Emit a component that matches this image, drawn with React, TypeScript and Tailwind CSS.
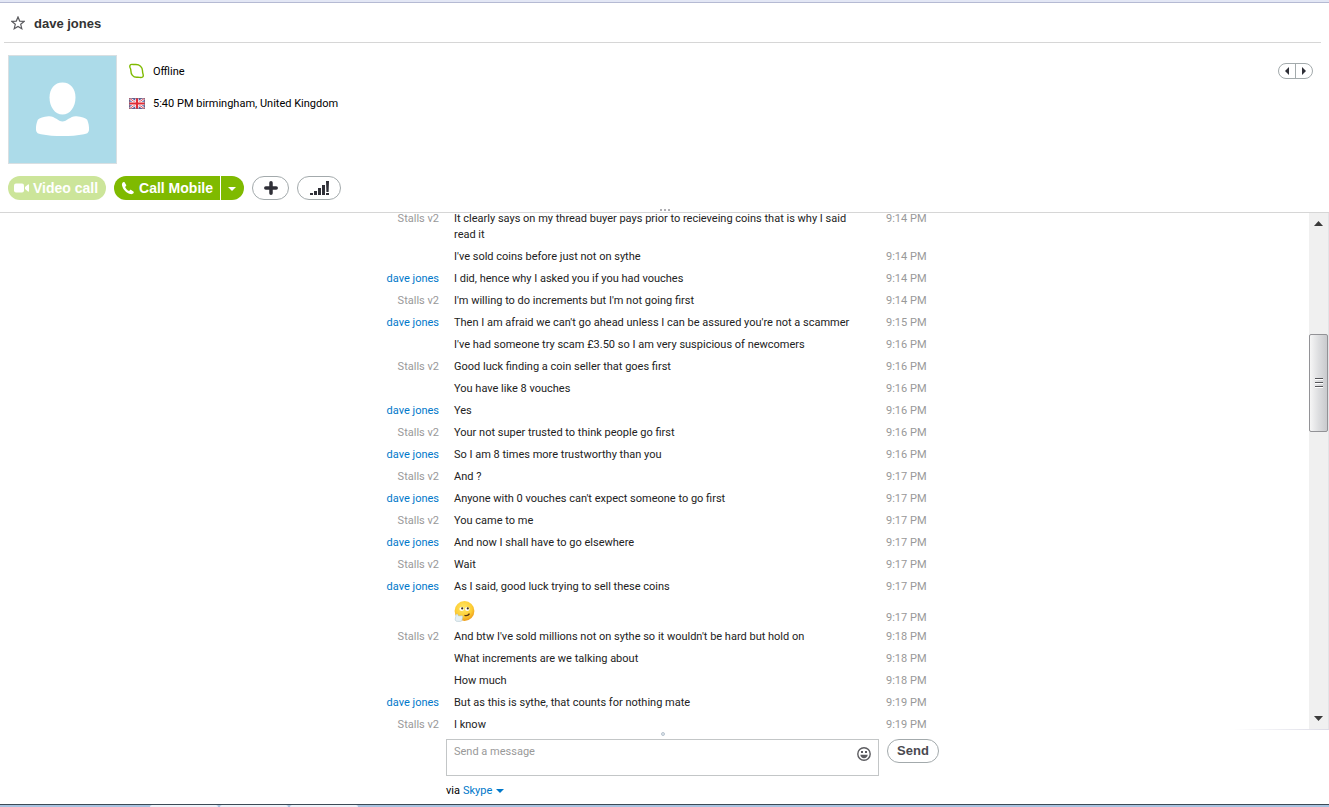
import clsx from "clsx"
import type { ReactNode } from "react"

interface Message {
  from?: string
  text: string
  time: string
}

const ME = "Stalls v2"
const FRIEND = "dave jones"

const messages: Message[] = [
  {
    from: ME,
    text: "It clearly says on my thread buyer pays prior to recieveing coins that is why I said read it",
    time: "9:14 PM",
  },
  { text: "I've sold coins before just not on sythe", time: "9:14 PM" },
  { from: FRIEND, text: "I did, hence why I asked you if you had vouches", time: "9:14 PM" },
  { from: ME, text: "I'm willing to do increments but I'm not going first", time: "9:14 PM" },
  {
    from: FRIEND,
    text: "Then I am afraid we can't go ahead unless I can be assured you're not a scammer",
    time: "9:15 PM",
  },
  { text: "I've had someone try scam £3.50 so I am very suspicious of newcomers", time: "9:16 PM" },
  { from: ME, text: "Good luck finding a coin seller that goes first", time: "9:16 PM" },
  { text: "You have like 8 vouches", time: "9:16 PM" },
  { from: FRIEND, text: "Yes", time: "9:16 PM" },
  { from: ME, text: "Your not super trusted to think people go first", time: "9:16 PM" },
  { from: FRIEND, text: "So I am 8 times more trustworthy than you", time: "9:16 PM" },
  { from: ME, text: "And ?", time: "9:17 PM" },
  { from: FRIEND, text: "Anyone with 0 vouches can't expect someone to go first", time: "9:17 PM" },
  { from: ME, text: "You came to me", time: "9:17 PM" },
  { from: FRIEND, text: "And now I shall have to go elsewhere", time: "9:17 PM" },
  { from: ME, text: "Wait", time: "9:17 PM" },
  { from: FRIEND, text: "As I said, good luck trying to sell these coins", time: "9:17 PM" },
  { text: ":think:", time: "9:17 PM" },
  {
    from: ME,
    text: "And btw I've sold millions not on sythe so it wouldn't be hard but hold on",
    time: "9:18 PM",
  },
  { text: "What increments are we talking about", time: "9:18 PM" },
  { text: "How much", time: "9:18 PM" },
  { from: FRIEND, text: "But as this is sythe, that counts for nothing mate", time: "9:19 PM" },
  { from: ME, text: "I know", time: "9:19 PM" },
]

function StarIcon() {
  return (
    <svg width="14" height="14" viewBox="0 0 14 14" fill="none" stroke="#5a5a5e" strokeWidth="1.2">
      <path d="M7 1l1.7 4.1 4.4.3-3.4 2.9 1.1 4.4L7 10.4l-3.8 2.3 1.1-4.4L.9 5.4l4.4-.3z" />
    </svg>
  )
}

function Avatar() {
  return (
    <svg width="109" height="109" viewBox="0 0 109 109" role="img" aria-label="dave jones">
      <rect x="0.5" y="0.5" width="108" height="108" fill="#acdbe9" stroke="#d8dfe2" />
      <path
        d="M54.5 27.5c8 0 13 6.2 13 15 0 9.500-5.500 17-13 17s-13-7.500-13-17c0-8.800 5-15 13-15z"
        fill="#fff"
      />
      <path
        d="M40.500 61.300c6-.6 9.500 5.200 14 5.200s8-5.800 14-5.200c5 .5 9 1.700 10.700 3.400 1.300 3.300 2.100 7 1.800 10-.3 3.500-2.500 4-5 4.500-13 2.500-30 2.500-43 0-2.500-.5-4.700-1-5-4.500-.3-3 .5-6.700 1.800-10 1.700-1.700 5.700-2.900 10.700-3.400z"
        fill="#fff"
      />
    </svg>
  )
}

function OfflineIcon() {
  return (
    <svg width="16" height="16" viewBox="0 0 16 16" fill="none" stroke="#7fba00" strokeWidth="1.4">
      <path d="M1 4.400C.4 2.500 1.300 1.200 3.100 1.400c1.400.1 2 .2 3.400.1C10.600 1.300 13.500 4 13.500 7.800c0 1.500.1 2.100.5 3.200.5 1.400.4 2.300-.4 3-.9.7-1.800.6-3.100.4-1.100-.2-1.800-.1-2.900-.1C4 14.300 1.900 11.200 1.900 8c0-1.500-.4-2.300-.9-3.600z" />
    </svg>
  )
}

function FlagIcon() {
  return (
    <svg width="16" height="11" viewBox="0 0 16 11">
      <rect width="16" height="11" fill="#4a63a8" />
      <path d="M0 0l16 11M16 0L0 11" stroke="#fff" strokeWidth="2.4" />
      <path d="M0 0l16 11M16 0L0 11" stroke="#e0505a" strokeWidth="1" />
      <path d="M8 0v11M0 5.500h16" stroke="#fff" strokeWidth="3.6" />
      <path d="M8 0v11M0 5.500h16" stroke="#e02c37" strokeWidth="2.2" />
      <rect x="0.5" y="0.5" width="15" height="10" fill="none" stroke="#7c5c78" strokeOpacity="0.6" />
    </svg>
  )
}

function CameraIcon() {
  return (
    <svg width="15" height="10" viewBox="0 0 15 10" fill="currentColor">
      <rect y="0.5" width="10" height="9" rx="2" />
      <path d="M11 4l3-2.500q1-.5 1 .5v6q0 1-1 .5L11 6z" />
    </svg>
  )
}

function PhoneIcon() {
  return (
    <svg width="14" height="14" viewBox="0 0 14 14" fill="currentColor">
      <path d="M2.200 1.300C1 2 .7 3.200 1.100 4.700c.9 3.600 4.200 7.200 8 8.300 1.600.4 2.900 0 3.600-1.300.2-.5.100-.9-.3-1.200L10.200 9c-.4-.3-.9-.3-1.200.1l-.8.9C6.300 9.200 4.900 7.700 4.100 5.900l.9-.8c.3-.3.4-.7.200-1.100L3.700 1.500c-.3-.5-.9-.5-1.500-.2z" />
    </svg>
  )
}

function PlusIcon() {
  return (
    <svg width="14" height="14" viewBox="0 0 14 14" stroke="#2f2f37" strokeWidth="3.5" strokeLinecap="round">
      <path d="M7 1.800v10.400M1.800 7h10.400" />
    </svg>
  )
}

function SignalIcon() {
  return (
    <svg width="19" height="14" viewBox="0 0 19 14" fill="#2f2f37">
      <path d="M0 12h3v2H0zM4 10h3v4H4zM8 7h3v7H8zM12 4h3v10h-3zM16 0h3l-.4 11h-2.200zM16 12h3v2h-3z" />
    </svg>
  )
}

function CaretIcon() {
  return (
    <svg width="8" height="4" viewBox="0 0 8 4" fill="currentColor">
      <path d="M0 0h8L4 4z" />
    </svg>
  )
}

function ThinkingEmoji() {
  return (
    <svg width="21" height="21" viewBox="0 0 21 21" role="img" aria-label="thinking">
      <defs>
        <radialGradient id="face" cx="0.45" cy="0.35" r="0.65">
          <stop offset="0" stopColor="#ffe768" />
          <stop offset="0.65" stopColor="#fdce35" />
          <stop offset="1" stopColor="#ee9d1b" />
        </radialGradient>
      </defs>
      <circle cx="10.5" cy="10" r="9.9" fill="url(#face)" />
      <ellipse cx="7.7" cy="8" rx="2.3" ry="1.9" fill="#fff" />
      <ellipse cx="13.3" cy="8" rx="2.3" ry="1.9" fill="#fff" />
      <circle cx="8.2" cy="7.4" r="1.1" fill="#3b2c1c" />
      <circle cx="13.8" cy="7.4" r="1.1" fill="#3b2c1c" />
      <path d="M10.500 14.300c2 .7 3.800.2 5-1.600" stroke="#5a3310" strokeWidth="1.4" fill="none" />
      <path
        d="M2.200 13.500c.6-.8 1.700-.4 1.900.5l.3 1 3.200-.2c1 0 1.300.7 1 1.500l-.5 2.700c-.2 1-1 1.400-2 1.400H3.300c-1.400 0-2.100-.9-2.100-2.200z"
        fill="#e6f0f4"
        stroke="#a9c3cb"
        strokeWidth="0.5"
      />
    </svg>
  )
}

function SmileIcon() {
  return (
    <svg width="14" height="14" viewBox="0 0 14 14">
      <circle cx="7" cy="7" r="6.2" fill="none" stroke="#5c5c60" strokeWidth="1.4" />
      <rect x="4" y="4" width="2" height="2" fill="#5c5c60" />
      <rect x="8" y="4" width="2" height="2" fill="#5c5c60" />
      <path d="M3.300 7.700h7.400c-.2 2.200-1.800 3.500-3.700 3.500s-3.500-1.300-3.700-3.500z" fill="#5c5c60" />
    </svg>
  )
}

function PillButton({ label, className, children }: { label: string; className?: string; children: ReactNode }) {
  return (
    <button
      aria-label={label}
      className={clsx("flex h-6 items-center justify-center rounded-full border border-[#a3aaac] bg-white", className)}
    >
      {children}
    </button>
  )
}

function ContactHeader() {
  return (
    <header className="shrink-0 border-b border-[#d6d6d6]">
      <div className="mr-2 ml-1 flex h-10 items-center gap-[9px] border-b border-[#d6d6d6] pl-[7px]">
        <button aria-label="Add to favourites">
          <StarIcon />
        </button>
        <h1 className="pt-0.5 font-['Liberation_Sans',sans-serif] text-[13px] font-bold text-[#333]">dave jones</h1>
      </div>

      <div className="flex items-start gap-3 pt-3 pr-4 pl-2">
        <Avatar />
        <div className="flex flex-1 flex-col gap-4 pt-2 text-black">
          <div className="flex h-4 items-center gap-2">
            <OfflineIcon />
            <span className="pt-0.5">Offline</span>
          </div>
          <div className="flex h-4 items-center gap-2">
            <FlagIcon />
            <span className="pt-0.5">5:40 PM birmingham, United Kingdom</span>
          </div>
        </div>
        <nav className="mt-2 flex h-4 w-[35px] rounded-full border border-[#a3aaac] text-[#2f2f37]">
          <button aria-label="Previous contact" className="flex flex-1 items-center justify-center border-r border-[#a3aaac]">
            <svg width="4" height="8" viewBox="0 0 4 8" fill="currentColor">
              <path d="M4 0v8L0 4z" />
            </svg>
          </button>
          <button aria-label="Next contact" className="flex flex-1 items-center justify-center">
            <svg width="4" height="8" viewBox="0 0 4 8" fill="currentColor">
              <path d="M0 0v8l4-4z" />
            </svg>
          </button>
        </nav>
      </div>

      <div className="flex gap-2 pt-3 pb-[9px] pl-2 font-['Liberation_Sans',sans-serif] text-[14px] font-bold text-white">
        <button disabled className="flex h-6 w-[98px] items-center gap-1 rounded-full bg-[#cce59a] pl-1.5">
          <CameraIcon />
          Video call
        </button>
        <div className="flex h-6 gap-px">
          <button className="flex w-[106px] items-center justify-center gap-1 rounded-l-full bg-[#7fba00]">
            <PhoneIcon />
            Call Mobile
          </button>
          <button aria-label="More call options" className="flex w-[23px] items-center rounded-r-full bg-[#7fba00] pt-0.5 pl-[7px]">
            <CaretIcon />
          </button>
        </div>
        <PillButton label="Add people" className="w-[37px]">
          <PlusIcon />
        </PillButton>
        <PillButton label="Call quality" className="w-11">
          <SignalIcon />
        </PillButton>
      </div>

      <div className="flex h-[3px] items-start justify-center gap-0.5">
        <i className="size-0.5 bg-[#b0b0b4]" />
        <i className="size-0.5 bg-[#b0b0b4]" />
        <i className="size-0.5 bg-[#b0b0b4]" />
      </div>
    </header>
  )
}

function MessageRow({ message }: { message: Message }) {
  const isEmoji = message.text === ":think:"
  return (
    <li
      className={clsx(
        "grid grid-cols-[69px_417px_auto] gap-x-[15px]",
        isEmoji ? "h-7 items-end" : "items-start py-[3px]",
      )}
    >
      <span className={clsx("text-right", message.from === FRIEND ? "text-[#0078ca]" : "text-[#999]")}>
        {message.from}
      </span>
      {isEmoji ? (
        <span className="self-start pt-[3px]">
          <ThinkingEmoji />
        </span>
      ) : (
        <p className="pr-3 text-[#222]">{message.text}</p>
      )}
      <time className="text-[#999]">{message.time}</time>
    </li>
  )
}

function ScrollTrack() {
  return (
    <div className="flex w-5 shrink-0 flex-col items-center border-r border-[#e3e3e6] bg-[#f0f0f0] pt-2 pb-2 text-[#3a3a3a]">
      <button aria-label="Scroll up">
        <svg width="9" height="5" viewBox="0 0 9 5" fill="currentColor" className="block">
          <path d="M4.500 0L9 5H0z" />
        </svg>
      </button>
      <div className="basis-[108px]" />
      <div className="flex h-[98px] w-[19px] shrink-0 flex-col items-center justify-center gap-0.5 rounded-xs border border-[#929296] bg-linear-to-r from-[#f6f6f6] via-[#dddee0] to-[#c9cacd]">
        <i className="h-0.5 w-2 border-b border-white bg-[#55565a]" />
        <i className="h-0.5 w-2 border-b border-white bg-[#55565a]" />
        <i className="h-0.5 w-2 border-b border-white bg-[#55565a]" />
      </div>
      <div className="flex-1" />
      <button aria-label="Scroll down">
        <svg width="9" height="5" viewBox="0 0 9 5" fill="currentColor" className="block">
          <path d="M0 0h9L4.500 5z" />
        </svg>
      </button>
    </div>
  )
}

function Composer() {
  return (
    <footer className="shrink-0">
      <div className="mr-1 flex h-[9px] items-center justify-center pb-px">
        <i className="size-1 rounded-full border border-[#b8c4cf] bg-[#dfe6ec]" />
      </div>
      <form className="mr-5 flex justify-center">
        <div className="flex w-[569px] items-start gap-2 pl-[76px]">
          <div className="flex h-[37px] flex-1 border border-[#c3c6c7] px-[7px] pt-1">
            <textarea
              aria-label="Message"
              placeholder="Send a message"
              className="h-full flex-1 resize-none overflow-hidden outline-none placeholder:text-[#999]"
            />
            <button type="button" aria-label="Insert emoticon" className="mt-[3px] h-3.5">
              <SmileIcon />
            </button>
          </div>
          <button
            type="button"
            className="h-6 w-[52px] rounded-full border border-[#a3aaac] font-['Liberation_Sans',sans-serif] text-[13px] font-bold text-[#4a4a50]"
          >
            Send
          </button>
        </div>
      </form>
      <div className="mr-5 flex justify-center">
        <div className="flex w-[569px] gap-[3px] pt-[7px] pb-[5px] pl-[76px] text-black">
          via
          <button className="flex items-center gap-1 text-[#0078ca]">
            Skype
            <CaretIcon />
          </button>
        </div>
      </div>
    </footer>
  )
}

function Taskbar() {
  return (
    <div className="flex h-[3px] shrink-0 gap-0.5 border-t border-[#3d4a55] bg-[#a9c3e0] pl-[150px]">
      <i className="w-[68px] rounded-t-xs bg-[#eef3fa]" />
      <i className="w-[68px] rounded-t-xs bg-[#eef3fa]" />
      <i className="w-[68px] rounded-t-xs bg-[#eef3fa]" />
    </div>
  )
}

export default function App() {
  return (
    <div className="flex h-screen flex-col overflow-hidden bg-white font-[Roboto,sans-serif] text-[11px] leading-4">
      <div className="h-[3px] shrink-0 border-b border-[#b5bad3] bg-[#e3e7f5]" />
      <ContactHeader />
      <main className="flex min-h-0 flex-1">
        <div className="flex flex-1 justify-center overflow-hidden">
          <ol className="-mt-[5px] w-[569px]">
            {messages.map((message, index) => (
              <MessageRow key={index} message={message} />
            ))}
          </ol>
        </div>
        <ScrollTrack />
      </main>
      <div className="h-px w-24 shrink-0 self-end bg-linear-to-r from-white to-[#dcdce6]" />
      <Composer />
      <Taskbar />
    </div>
  )
}
